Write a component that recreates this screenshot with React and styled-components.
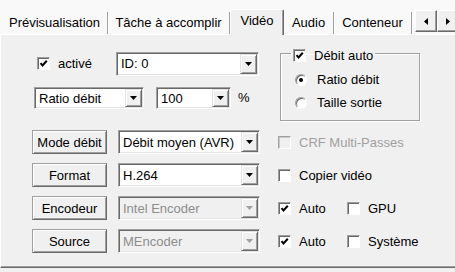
import React from 'react';
import styled, { createGlobalStyle } from 'styled-components';

const GlobalStyle = createGlobalStyle`
  body {
    margin: 0;
    background: #f0f0f0;
    font-family: "Liberation Sans", Arial, sans-serif;
    font-size: 13px;
    color: #000;
  }
`;

const Window = styled.div`
  width: 455px;
  height: 272px;
  overflow: hidden;
  background: #f0f0f0;
`;

const TabStrip = styled.div`
  display: flex;
  align-items: flex-end;
  height: 34px;
  padding-left: 2px;
  background: #f9f9f9;
  box-sizing: border-box;
`;

const Tab = styled.div`
  flex-shrink: 0;
  box-sizing: border-box;
  width: ${p => p.$w}px;
  text-align: center;
  white-space: nowrap;
  line-height: 22px;
  ${p => p.$active ? `
    height: 26px;
    margin-bottom: -1px;
    padding-bottom: 4px;
    background: #f0f0f0;
    border: 1px solid #fff;
    border-bottom: none;
    border-right: 1px solid #696969;
    box-shadow: inset -1px 0 0 #a0a0a0;
    border-radius: 2px 2px 0 0;
    position: relative;
    z-index: 1;
  ` : `
    height: 22px;
    border-right: 1px solid #a0a0a0;
    box-shadow: 1px 0 0 #fff;
  `}
`;

const ScrollGroup = styled.div`
  display: flex;
  margin-left: 3px;
  margin-bottom: 2px;
`;

const ArrowBtn = styled.div`
  width: 22px;
  height: 22px;
  flex-shrink: 0;
  box-sizing: border-box;
  display: flex;
  align-items: center;
  justify-content: center;
  background: #f0f0f0;
  border: 1px solid;
  border-color: #fff #696969 #696969 #fff;
  box-shadow: inset -1px -1px 0 #a0a0a0;
`;

const Panel = styled.div`
  height: 234px;
  box-sizing: border-box;
  background: #f0f0f0;
  border-top: 1px solid #fff;
  border-left: 1px solid #fff;
  border-bottom: 1px solid #696969;
  box-shadow: inset 0 -1px 0 #a0a0a0;
  padding: 14px 0 0 31px;
`;

const Grid = styled.div`
  display: grid;
  grid-template-columns: 228px 142px;
  grid-template-rows: 29px 34px 24px 24px 24px 24px;
  column-gap: 18px;
  row-gap: 9px;
`;

const Row = styled.div`
  display: flex;
  align-items: ${p => p.$align || 'center'};
  gap: ${p => p.$gap || 0}px;
`;

const CheckLabel = styled.label`
  display: inline-flex;
  align-items: center;
  gap: 8px;
  flex-shrink: 0;
  white-space: nowrap;
  margin-left: ${p => p.$ml || 0}px;
  width: ${p => (p.$w ? `${p.$w}px` : 'auto')};
  color: ${p => (p.$disabled ? '#a0a0a0' : '#000')};
`;

const Box = styled.span`
  width: 13px;
  height: 13px;
  box-sizing: border-box;
  display: inline-flex;
  align-items: center;
  justify-content: center;
  background: ${p => (p.$disabled ? '#f0f0f0' : '#fff')};
  border: 1px solid;
  border-color: #a0a0a0 #fff #fff #a0a0a0;
  box-shadow: inset 1px 1px 0 ${p => (p.$disabled ? '#c8c8c8' : '#696969')};
`;

const RadioCircle = styled.span`
  width: 12px;
  height: 12px;
  box-sizing: border-box;
  border-radius: 50%;
  display: inline-flex;
  align-items: center;
  justify-content: center;
  background: #fff;
  border: 1px solid;
  border-color: #a0a0a0 #fff #fff #a0a0a0;
  box-shadow: inset 1px 1px 0 #696969;
`;

const Dot = styled.span`
  width: 4px;
  height: 4px;
  border-radius: 50%;
  background: #000;
`;

const RadioLabel = styled.label`
  display: flex;
  align-items: center;
  gap: 10px;
  height: 23px;
  margin-left: 4px;
`;

const ComboBox = styled.div`
  display: flex;
  align-items: center;
  flex-shrink: 0;
  box-sizing: border-box;
  width: ${p => p.$w}px;
  height: ${p => p.$h || 24}px;
  margin-left: ${p => p.$ml || 0}px;
  padding: 1px;
  background: ${p => (p.$disabled ? '#f0f0f0' : '#fff')};
  color: ${p => (p.$disabled ? '#8d8d8d' : '#000')};
  border: 1px solid;
  border-color: #a0a0a0 #fff #fff #a0a0a0;
  box-shadow: inset 1px 1px 0 #696969, inset -1px -1px 0 #e3e3e3;
`;

const ComboText = styled.span`
  flex: 1;
  padding-left: 3px;
  white-space: nowrap;
  overflow: hidden;
`;

const DropBtn = styled.span`
  width: 17px;
  align-self: stretch;
  box-sizing: border-box;
  display: flex;
  align-items: center;
  justify-content: center;
  background: #f0f0f0;
  border: 1px solid;
  border-color: #e3e3e3 #696969 #696969 #e3e3e3;
  box-shadow: inset 1px 1px 0 #fff, inset -1px -1px 0 #a0a0a0;
`;

const PushButton = styled.div`
  width: 75px;
  height: 24px;
  flex-shrink: 0;
  box-sizing: border-box;
  display: flex;
  align-items: center;
  justify-content: center;
  background: #f0f0f0;
  border: 1px solid;
  border-color: #a0a0a0 #696969 #696969 #a0a0a0;
  box-shadow: inset 1px 1px 0 #fff, inset -1px -1px 0 #a0a0a0;
`;

const Unit = styled.span`
  margin-left: 7px;
  line-height: 22px;
`;

const GroupBox = styled.fieldset`
  grid-column: 2;
  grid-row: 1 / span 2;
  margin: -4px 0 0 2px;
  min-width: 0;
  width: 140px;
  box-sizing: border-box;
  padding: 6px 0 0 10px;
  border: 1px solid #a0a0a0;
  box-shadow: inset 1px 1px 0 #fff, 1px 1px 0 #fff;
`;

const Legend = styled.legend`
  padding: 4px 2px 0;
  line-height: 13px;
`;

const RightRow = styled.div`
  grid-column: 2;
  display: flex;
  align-items: center;
`;

const Check = ({ checked, disabled }) => (
  <Box $disabled={disabled}>
    {checked && (
      <svg width="9" height="9" viewBox="0 0 9 9">
        <polyline points="1.5,4.2 3.5,6.5 7.8,1.8" fill="none" stroke="#000" strokeWidth="2" />
      </svg>
    )}
  </Box>
);

const Combo = ({ value, w, h, ml, disabled }) => (
  <ComboBox $w={w} $h={h} $ml={ml} $disabled={disabled}>
    <ComboText>{value}</ComboText>
    <DropBtn>
      <svg width="7" height="4" viewBox="0 0 7 4">
        <polygon points="0,0 7,0 3.5,4" fill={disabled ? '#a0a0a0' : '#000'} />
      </svg>
    </DropBtn>
  </ComboBox>
);

const tabs = [
  { label: 'Prévisualisation', w: 106 },
  { label: 'Tâche à accomplir', w: 122 },
  { label: 'Vidéo', w: 54, active: true },
  { label: 'Audio', w: 50 },
  { label: 'Conteneur', w: 78 },
];

const buttonRows = [
  { label: 'Mode débit', value: 'Débit moyen (AVR)' },
  { label: 'Format', value: 'H.264' },
  { label: 'Encodeur', value: 'Intel Encoder', disabled: true },
  { label: 'Source', value: 'MEncoder', disabled: true },
];

export default function App() {
  return (
    <Window>
      <GlobalStyle />
      <TabStrip>
        {tabs.map(t => (
          <Tab key={t.label} $w={t.w} $active={t.active}>{t.label}</Tab>
        ))}
        <ScrollGroup>
          <ArrowBtn>
            <svg width="4" height="7" viewBox="0 0 4 7"><polygon points="4,0 4,7 0,3.5" fill="#000" /></svg>
          </ArrowBtn>
          <ArrowBtn>
            <svg width="4" height="7" viewBox="0 0 4 7"><polygon points="0,0 0,7 4,3.5" fill="#000" /></svg>
          </ArrowBtn>
        </ScrollGroup>
      </TabStrip>

      <Panel>
        <Grid>
          <Row>
            <CheckLabel $ml={5}>
              <Check checked />
              activé
            </CheckLabel>
            <Combo value="ID: 0" w={143} ml={24} />
          </Row>

          <GroupBox>
            <Legend>
              <CheckLabel>
                <Check checked />
                Débit auto
              </CheckLabel>
            </Legend>
            <RadioLabel>
              <RadioCircle><Dot /></RadioCircle>
              Ratio débit
            </RadioLabel>
            <RadioLabel>
              <RadioCircle />
              Taille sortie
            </RadioLabel>
          </GroupBox>

          <Row $align="flex-start">
            <Combo value="Ratio débit" w={110} h={22} ml={2} />
            <Combo value="100" w={75} h={22} ml={12} />
            <Unit>%</Unit>
          </Row>

          {buttonRows.map((r, i) => (
            <React.Fragment key={r.label}>
              <Row $gap={11} style={{ gridRow: i + 3 }}>
                <PushButton>{r.label}</PushButton>
                <Combo value={r.value} w={142} disabled={r.disabled} />
              </Row>
              {i === 0 && (
                <RightRow>
                  <CheckLabel $disabled>
                    <Check disabled />
                    CRF Multi-Passes
                  </CheckLabel>
                </RightRow>
              )}
              {i === 1 && (
                <RightRow>
                  <CheckLabel>
                    <Check />
                    Copier vidéo
                  </CheckLabel>
                </RightRow>
              )}
              {i === 2 && (
                <RightRow>
                  <CheckLabel $w={69}><Check checked />Auto</CheckLabel>
                  <CheckLabel><Check />GPU</CheckLabel>
                </RightRow>
              )}
              {i === 3 && (
                <RightRow>
                  <CheckLabel $w={69}><Check checked />Auto</CheckLabel>
                  <CheckLabel><Check />Système</CheckLabel>
                </RightRow>
              )}
            </React.Fragment>
          ))}
        </Grid>
      </Panel>
    </Window>
  );
}
